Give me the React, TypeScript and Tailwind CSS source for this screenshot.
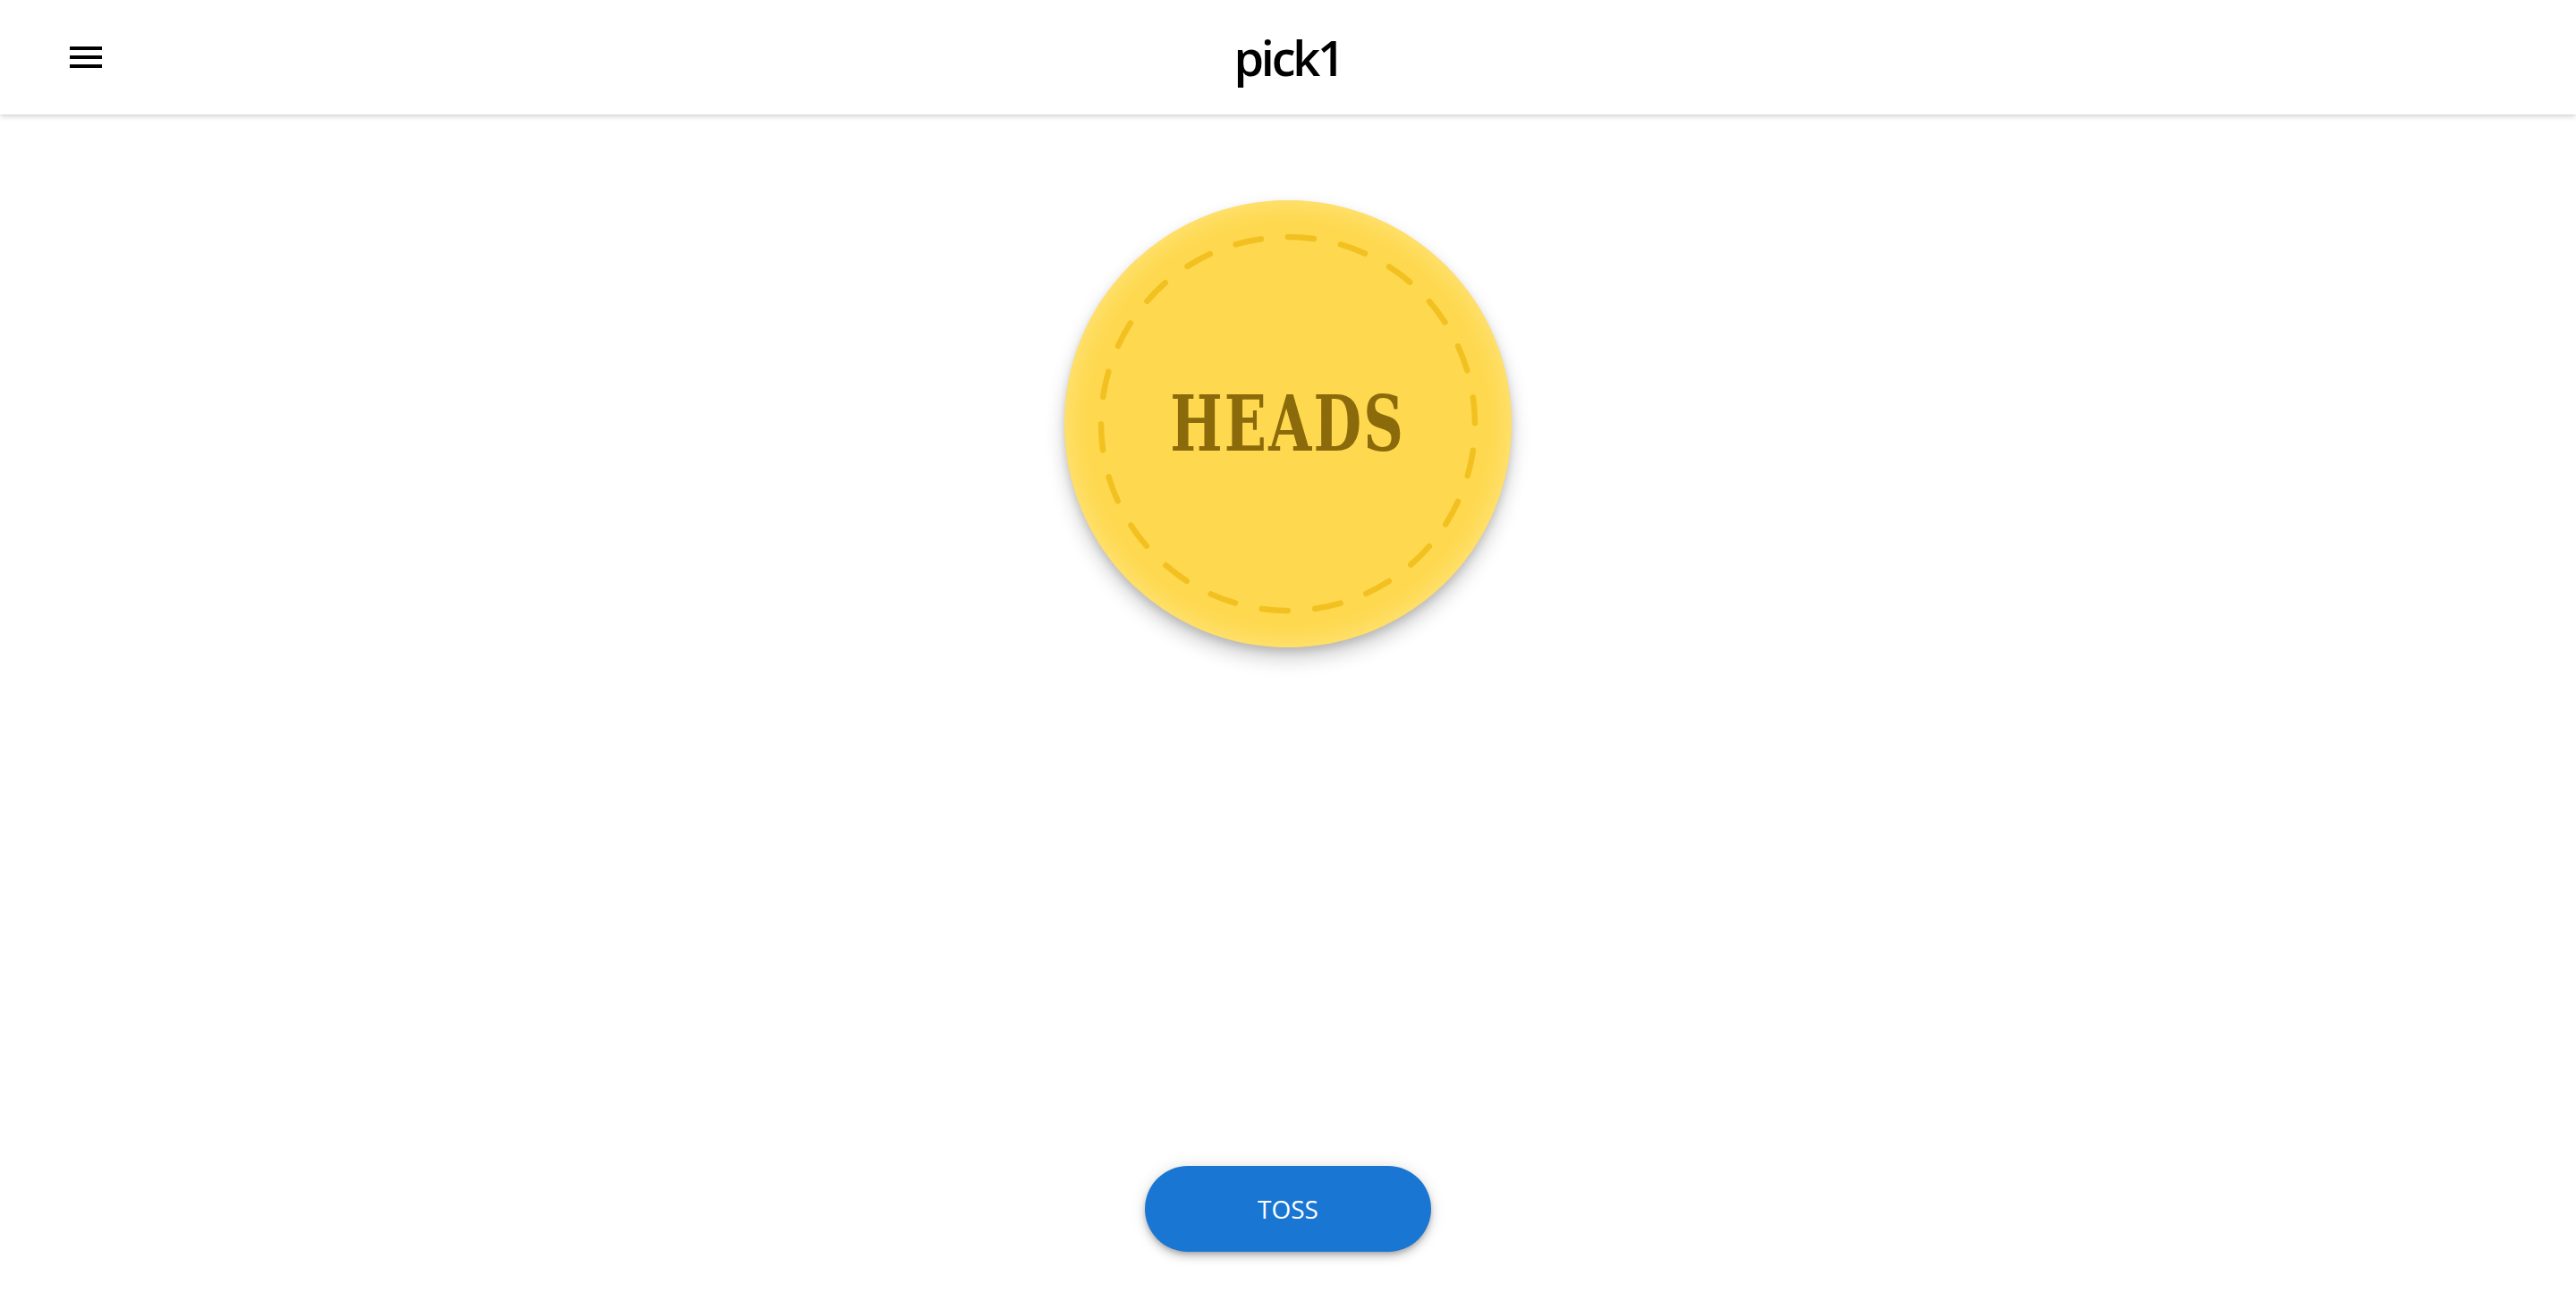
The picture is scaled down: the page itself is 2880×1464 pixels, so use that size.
import React from "react";

function MenuIcon() {
  return (
    <svg width="48" height="48" viewBox="0 0 24 24" fill="#000" aria-hidden>
      <path d="M3 18h18v-2H3v2zm0-5h18v-2H3v2zm0-7v2h18V6H3z" />
    </svg>
  );
}

function Coin() {
  const r = 209;
  const c = 2 * Math.PI * r;
  const period = c / 22;
  const dash = 29;
  return (
    <div className="relative flex h-[500px] w-[500px] items-center justify-center rounded-full bg-[#fed84e] shadow-[inset_0_0_26px_6px_#ffe377,0_12px_22px_rgba(0,0,0,0.2),0_5px_8px_rgba(0,0,0,0.12)]">
      <svg
        className="absolute left-0 top-0"
        width="500"
        height="500"
        viewBox="0 0 500 500"
        aria-hidden
      >
        <circle
          cx="250"
          cy="250"
          r={r}
          fill="none"
          stroke="#f2c121"
          strokeWidth="6.5"
          strokeLinecap="round"
          strokeDasharray={`${dash} ${period - dash}`}
          transform="rotate(-90 250 250)"
        />
      </svg>
      <span className="relative inline-block origin-center scale-x-[0.72] font-['DejaVu_Serif',serif] text-[86px] font-bold leading-none tracking-[0.035em] text-[#8b6a0b]">
        HEADS
      </span>
    </div>
  );
}

export default function App() {
  return (
    <div className="flex min-h-screen flex-col bg-white font-['Open_Sans',sans-serif]">
      <header className="relative z-10 grid h-[128px] grid-cols-[1fr_auto_1fr] items-center bg-white shadow-[0_2px_4px_-1px_rgba(0,0,0,0.1),0_4px_5px_0_rgba(0,0,0,0.06),0_1px_10px_0_rgba(0,0,0,0.05)]">
        <div className="flex items-center pl-[72px]">
          <MenuIcon />
        </div>
        <h1 className="text-[54px] font-semibold leading-none tracking-[-0.06em] text-black">
          pick1
        </h1>
        <div />
      </header>
      <main className="flex flex-1 flex-col items-center pb-16 pt-24">
        <Coin />
        <div className="flex-1" />
        <button className="h-[96px] w-[320px] rounded-full bg-[#1976d2] text-[28px] font-normal text-white shadow-[0_3px_5px_-1px_rgba(0,0,0,0.2),0_6px_10px_0_rgba(0,0,0,0.14),0_1px_18px_0_rgba(0,0,0,0.12)]">
          TOSS
        </button>
      </main>
    </div>
  );
}
